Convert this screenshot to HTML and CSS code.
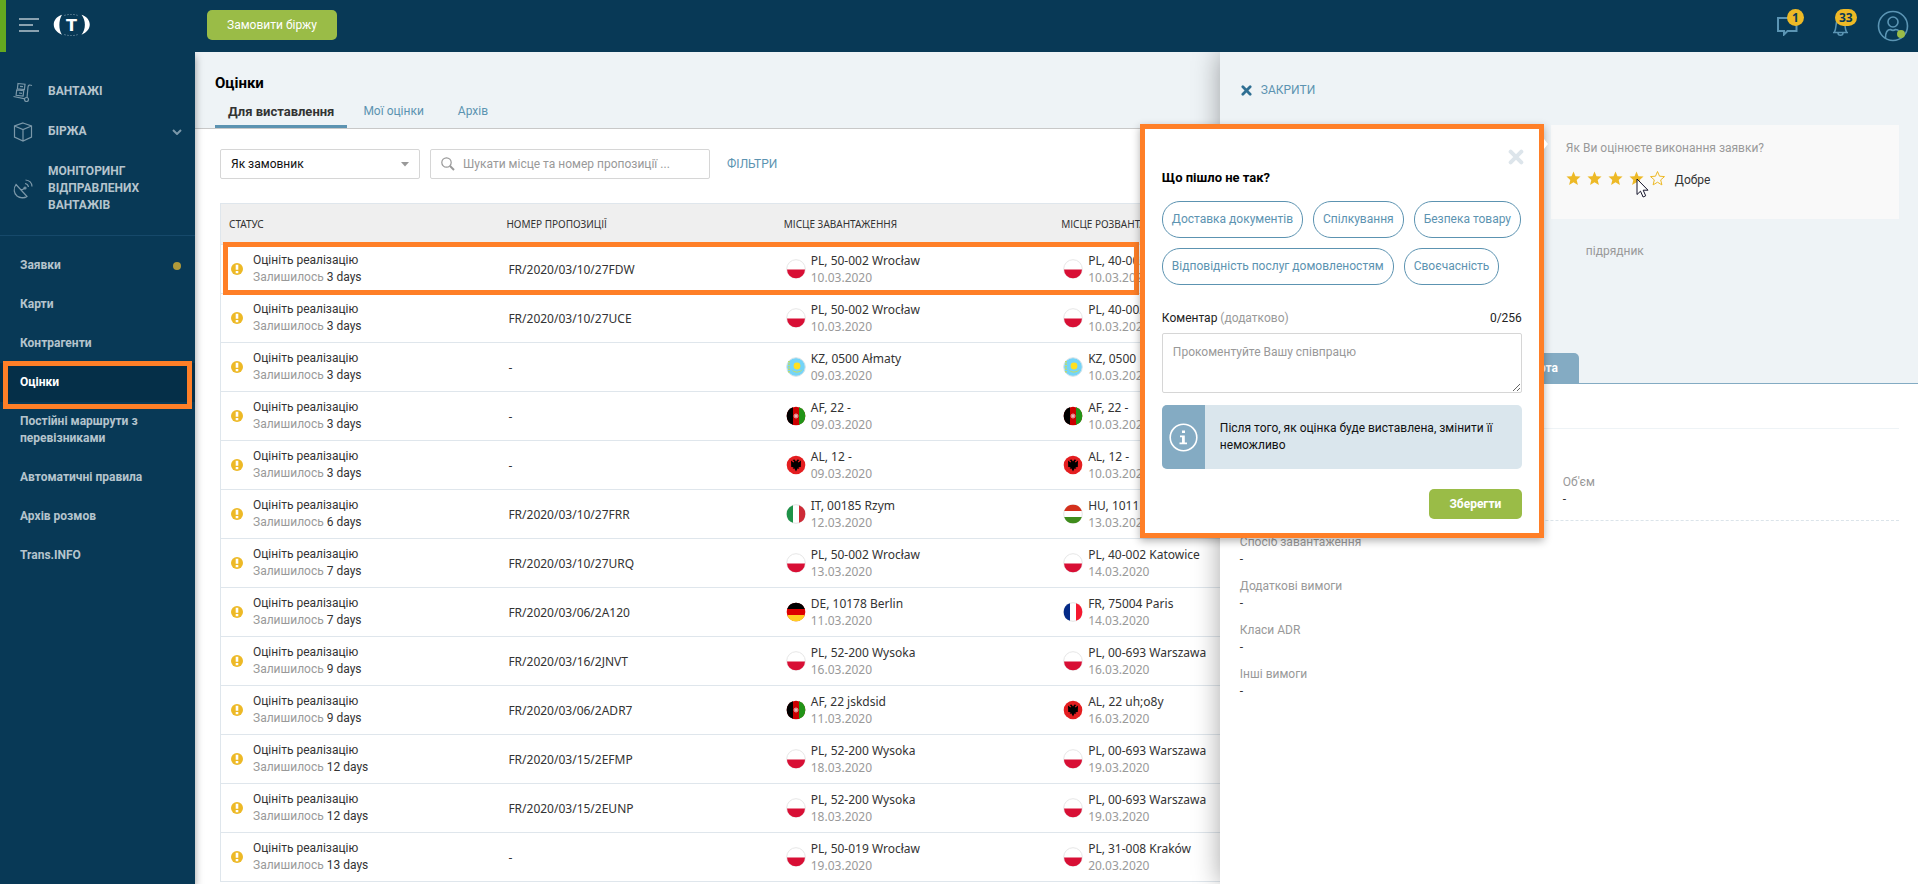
FILE: index.html
```html
<!DOCTYPE html>
<html lang="uk">
<head>
<meta charset="utf-8">
<meta name="viewport" content="width=device-width, initial-scale=1">
<title>Оцінки</title>
<link rel="stylesheet" href="styles.css">
</head>
<body>
<svg class="sprite" aria-hidden="true">
  <symbol id="warn" viewBox="0 0 12 12"><circle cx="6" cy="6" r="6" fill="#edb926"/><path d="M4.7 1.8h2.6v5H4.7zM4.7 8h2.6v2.3H4.7z" fill="#fff"/></symbol>
  <symbol id="pl" viewBox="0 0 20 20"><circle cx="10" cy="10" r="9.3" fill="#fff" stroke="#e6e6e6"/><path d="M1 10.5a9 8.8 0 0 0 18 0z" fill="#d80f35"/></symbol>
  <symbol id="kz" viewBox="0 0 20 20"><circle cx="10" cy="10" r="9.3" fill="#74d4f8" stroke="#d9e3e6"/><circle cx="11" cy="9" r="3.4" fill="#ffe01e"/><path d="M5.5 12c2 3.600 8.500 3.600 11 0-1 4-9.500 5-11 0z" fill="#d8df3c"/><path d="M3 4v12" stroke="#b8dc74" stroke-width="2" stroke-dasharray="1.500 1"/></symbol>
  <symbol id="af" viewBox="0 0 20 20"><circle cx="10" cy="10" r="9.300" fill="#c00"/><path d="M7 1.200a9.300 9.300 0 0 0 0 17.600z"/><path d="M13 1.200a9.300 9.300 0 0 1 0 17.600z" fill="#219417"/><circle cx="10" cy="10" r="2" fill="#d66" stroke="#e9a0a0"/><path d="M9 10.500h2v-1H9z" fill="#fff"/></symbol>
  <symbol id="al" viewBox="0 0 20 20"><circle cx="10" cy="10" r="9.300" fill="#e41e20"/><path d="M10 6.500 8.500 4.500 6.500 5l1.700 1.500-.7 1L5 5.500l.2 6.500 2.300.2-.8 1.600 1.800-.2L10 16.500l1.500-2.900 1.800.2-.8-1.600 2.300-.2.200-6.500-2.500 2-.7-1L13.500 5l-2-.5z"/></symbol>
  <symbol id="it" viewBox="0 0 20 20"><circle cx="10" cy="10" r="9.300" fill="#fff" stroke="#e3e3e3"/><path d="M7 1.200a9.300 9.300 0 0 0 0 17.600z" fill="#1e9248"/><path d="M13 1.200a9.300 9.300 0 0 1 0 17.600z" fill="#ce2b37"/></symbol>
  <symbol id="fr" viewBox="0 0 20 20"><circle cx="10" cy="10" r="9.300" fill="#fff" stroke="#e3e3e3"/><path d="M7 1.200a9.300 9.300 0 0 0 0 17.600z" fill="#042a87"/><path d="M13 1.200a9.300 9.300 0 0 1 0 17.600z" fill="#f5182f"/></symbol>
  <symbol id="hu" viewBox="0 0 20 20"><circle cx="10" cy="10" r="9.300" fill="#fff" stroke="#e3e3e3"/><path d="M1.200 7a9.300 9.300 0 0 1 17.600 0z" fill="#d4301c"/><path d="M1.200 13a9.300 9.300 0 0 0 17.600 0z" fill="#3f8c1c"/></symbol>
  <symbol id="de" viewBox="0 0 20 20"><circle cx="10" cy="10" r="9.300" fill="#dd0000"/><path d="M1.200 7a9.300 9.300 0 0 1 17.600 0z"/><path d="M1.200 13a9.300 9.300 0 0 0 17.600 0z" fill="#ffce22"/></symbol>
  <symbol id="star" viewBox="0 0 15 15"><path d="M7.500 .5l2 4.700 5 .4-3.800 3.300 1.200 5-4.400-2.700-4.400 2.700 1.200-5L.5 5.600l5-.4z"/></symbol>
  <symbol id="cross" viewBox="0 0 12 12"><path d="M2 2l8 8M10 2l-8 8" stroke="currentColor" stroke-width="3" stroke-linecap="round"/></symbol>
</svg>

<header class="topbar">
  <button class="burger" type="button" aria-label="Меню"><svg width="20" height="14" viewBox="0 0 20 14"><path d="M0 1h20M0 7h14M0 13h20" stroke="#8aa2b0" stroke-width="2"/></svg></button>
  <a class="logo" href="#" aria-label="Trans">
    <svg width="38" height="22" viewBox="0 0 38 22"><path d="M9 .8C-2 4.500-2 16.500 9 20.800 5.500 15.500 5.500 6.500 9 .8zM28.500 .8c11 3.700 11 15.700 0 20 4.500-5.500 4.500-14.500 0-20z" fill="#fff"/><path d="M11 1.500c5-1.500 10-1.500 14 0M11 20.500c5 1.500 10 1.500 14 0" fill="none" stroke="#4d7288" stroke-dasharray="2 1"/><text x="18.500" y="16.500" text-anchor="middle" class="logo-letter">T</text></svg>
  </a>
  <button class="btn btn-order" type="button">Замовити біржу</button>
  <div class="tools">
    <button class="tool" type="button" aria-label="Повідомлення"><svg width="21" height="20" viewBox="0 0 21 20"><path d="M1 2h18.500v13h-9L7 18.500V15H1z" fill="none" stroke="#5b95b4" stroke-width="2"/></svg><span class="badge">1</span></button>
    <button class="tool tool-bell" type="button" aria-label="Сповіщення"><svg width="17" height="20" viewBox="0 0 17 20"><path d="M1 16.500h15M2.500 16c2-3 1-10 3-12.500h6c2 2.500 1 9.500 3 12.500M6 17c0 3 5 3 5 0" fill="none" stroke="#5b95b4" stroke-width="1.500"/></svg><span class="badge">33</span></button>
    <button class="tool" type="button" aria-label="Профіль"><svg width="32" height="32" viewBox="0 0 32 32"><g fill="none" stroke="#5b95b4" stroke-width="1.600"><circle cx="16" cy="16" r="14.500"/><circle cx="16" cy="12" r="5"/><path d="M8.500 28c0-6 2-8.500 5-8.500 1.500 1 3.500 1 5 0 3 0 5 2.500 5 8.500"/></g><circle cx="24" cy="24" r="4" fill="#9abc47"/></svg></button>
  </div>
</header>

<div class="shell">
  <nav class="sidebar">
    <ul class="nav-main">
      <li><a href="#"><svg width="20" height="20" viewBox="0 0 20 20"><path d="M5 1.500l7 .7-.6 5.300-7-.7zM3.700 8l7 .7-.6 5.300-7-.7zM.5 14.500l11.500 2.300M19 3.500c-2.500-1-3.700-.5-4 1.500l-1 11M7 4.300l3 .3M6 11l3 .3"/><circle cx="13.500" cy="17.500" r="2"/></svg>ВАНТАЖІ</a></li>
      <li><a href="#"><svg width="20" height="20" viewBox="0 0 20 20"><path d="M10 1l8.500 3v11L10 19l-8.500-4V4zM1.500 4L10 7.500 18.500 4M10 7.500V19"/></svg>БІРЖА<svg class="chev" width="10" height="6" viewBox="0 0 10 6"><path d="M1 1l4 4 4-4"/></svg></a></li>
      <li><a href="#"><svg width="20" height="20" viewBox="0 0 20 20"><path d="M3 5.500c-3 4-2 9 1 11.500s7.500 2.500 10 .5zM3 5.500L14 17.500M8 11.500l4-2.500M2 15c3 4 8 4 10 3M12 4.500c2 .2 3.200 1.500 3.500 3.500M12.500 1c4 .3 6.300 3 6.500 6.500"/><circle cx="12" cy="9" r="1"/></svg>МОНІТОРИНГ ВІДПРАВЛЕНИХ ВАНТАЖІВ</a></li>
    </ul>
    <ul class="nav-sub">
      <li><a href="#">Заявки<i class="dot"></i></a></li>
      <li><a href="#">Карти</a></li>
      <li><a href="#">Контрагенти</a></li>
      <li class="active"><a href="#" aria-current="page">Оцінки</a></li>
      <li><a href="#">Постійні маршрути з перевізниками</a></li>
      <li><a href="#">Автоматичні правила</a></li>
      <li><a href="#">Архів розмов</a></li>
      <li><a href="#">Trans.INFO</a></li>
    </ul>
  </nav>

  <main class="content">
    <div class="page-head">
      <h1>Оцінки</h1>
      <nav class="tabs"><a class="current" href="#">Для виставлення</a><a href="#">Мої оцінки</a><a href="#">Архів</a></nav>
    </div>
    <div class="page-body">
      <form class="filters">
        <div class="select"><select aria-label="Роль"><option>Як замовник</option></select><svg width="8" height="5" viewBox="0 0 8 5"><path d="M0 0h8L4 4.500z" fill="#999"/></svg></div>
        <label class="search"><svg width="14" height="14" viewBox="0 0 14 14"><circle cx="5.500" cy="5.500" r="4.700" fill="none" stroke="#999" stroke-width="1.200"/><path d="M9 9l4 4" stroke="#999" stroke-width="2"/></svg><input type="text" aria-label="Пошук" placeholder="Шукати місце та номер пропозиції ..."></label>
        <a class="filter-link" href="#">ФІЛЬТРИ</a>
      </form>
      <div class="table-wrap">
      <table class="offers">
        <thead><tr><th>СТАТУС</th><th>НОМЕР ПРОПОЗИЦІЇ</th><th>МІСЦЕ ЗАВАНТАЖЕННЯ</th><th>МІСЦЕ РОЗВАНТАЖЕННЯ</th><td class="rest"></td></tr></thead>
        <tbody>
        <tr><td><div class="cell status"><svg><use href="#warn"/></svg><p>Оцініть реалізацію<br><span>Залишилось</span> 3 days</p></div></td><td>FR/2020/03/10/27FDW</td><td><div class="cell"><svg><use href="#pl"/></svg><p>PL, 50-002 Wrocław<br><span>10.03.2020</span></p></div></td><td><div class="cell"><svg><use href="#pl"/></svg><p>PL, 40-002<br><span>10.03.2020</span></p></div></td><td></td></tr>
        <tr><td><div class="cell status"><svg><use href="#warn"/></svg><p>Оцініть реалізацію<br><span>Залишилось</span> 3 days</p></div></td><td>FR/2020/03/10/27UCE</td><td><div class="cell"><svg><use href="#pl"/></svg><p>PL, 50-002 Wrocław<br><span>10.03.2020</span></p></div></td><td><div class="cell"><svg><use href="#pl"/></svg><p>PL, 40-002<br><span>10.03.2020</span></p></div></td><td></td></tr>
        <tr><td><div class="cell status"><svg><use href="#warn"/></svg><p>Оцініть реалізацію<br><span>Залишилось</span> 3 days</p></div></td><td>-</td><td><div class="cell"><svg><use href="#kz"/></svg><p>KZ, 0500 Ałmaty<br><span>09.03.2020</span></p></div></td><td><div class="cell"><svg><use href="#kz"/></svg><p>KZ, 0500<br><span>10.03.2020</span></p></div></td><td></td></tr>
        <tr><td><div class="cell status"><svg><use href="#warn"/></svg><p>Оцініть реалізацію<br><span>Залишилось</span> 3 days</p></div></td><td>-</td><td><div class="cell"><svg><use href="#af"/></svg><p>AF, 22 -<br><span>09.03.2020</span></p></div></td><td><div class="cell"><svg><use href="#af"/></svg><p>AF, 22 -<br><span>10.03.2020</span></p></div></td><td></td></tr>
        <tr><td><div class="cell status"><svg><use href="#warn"/></svg><p>Оцініть реалізацію<br><span>Залишилось</span> 3 days</p></div></td><td>-</td><td><div class="cell"><svg><use href="#al"/></svg><p>AL, 12 -<br><span>09.03.2020</span></p></div></td><td><div class="cell"><svg><use href="#al"/></svg><p>AL, 12 -<br><span>10.03.2020</span></p></div></td><td></td></tr>
        <tr><td><div class="cell status"><svg><use href="#warn"/></svg><p>Оцініть реалізацію<br><span>Залишилось</span> 6 days</p></div></td><td>FR/2020/03/10/27FRR</td><td><div class="cell"><svg><use href="#it"/></svg><p>IT, 00185 Rzym<br><span>12.03.2020</span></p></div></td><td><div class="cell"><svg><use href="#hu"/></svg><p>HU, 1011<br><span>13.03.2020</span></p></div></td><td></td></tr>
        <tr><td><div class="cell status"><svg><use href="#warn"/></svg><p>Оцініть реалізацію<br><span>Залишилось</span> 7 days</p></div></td><td>FR/2020/03/10/27URQ</td><td><div class="cell"><svg><use href="#pl"/></svg><p>PL, 50-002 Wrocław<br><span>13.03.2020</span></p></div></td><td><div class="cell"><svg><use href="#pl"/></svg><p>PL, 40-002 Katowice<br><span>14.03.2020</span></p></div></td><td></td></tr>
        <tr><td><div class="cell status"><svg><use href="#warn"/></svg><p>Оцініть реалізацію<br><span>Залишилось</span> 7 days</p></div></td><td>FR/2020/03/06/2A120</td><td><div class="cell"><svg><use href="#de"/></svg><p>DE, 10178 Berlin<br><span>11.03.2020</span></p></div></td><td><div class="cell"><svg><use href="#fr"/></svg><p>FR, 75004 Paris<br><span>14.03.2020</span></p></div></td><td></td></tr>
        <tr><td><div class="cell status"><svg><use href="#warn"/></svg><p>Оцініть реалізацію<br><span>Залишилось</span> 9 days</p></div></td><td>FR/2020/03/16/2JNVT</td><td><div class="cell"><svg><use href="#pl"/></svg><p>PL, 52-200 Wysoka<br><span>16.03.2020</span></p></div></td><td><div class="cell"><svg><use href="#pl"/></svg><p>PL, 00-693 Warszawa<br><span>16.03.2020</span></p></div></td><td></td></tr>
        <tr><td><div class="cell status"><svg><use href="#warn"/></svg><p>Оцініть реалізацію<br><span>Залишилось</span> 9 days</p></div></td><td>FR/2020/03/06/2ADR7</td><td><div class="cell"><svg><use href="#af"/></svg><p>AF, 22 jskdsid<br><span>11.03.2020</span></p></div></td><td><div class="cell"><svg><use href="#al"/></svg><p>AL, 22 uh;o8y<br><span>16.03.2020</span></p></div></td><td></td></tr>
        <tr><td><div class="cell status"><svg><use href="#warn"/></svg><p>Оцініть реалізацію<br><span>Залишилось</span> 12 days</p></div></td><td>FR/2020/03/15/2EFMP</td><td><div class="cell"><svg><use href="#pl"/></svg><p>PL, 52-200 Wysoka<br><span>18.03.2020</span></p></div></td><td><div class="cell"><svg><use href="#pl"/></svg><p>PL, 00-693 Warszawa<br><span>19.03.2020</span></p></div></td><td></td></tr>
        <tr><td><div class="cell status"><svg><use href="#warn"/></svg><p>Оцініть реалізацію<br><span>Залишилось</span> 12 days</p></div></td><td>FR/2020/03/15/2EUNP</td><td><div class="cell"><svg><use href="#pl"/></svg><p>PL, 52-200 Wysoka<br><span>18.03.2020</span></p></div></td><td><div class="cell"><svg><use href="#pl"/></svg><p>PL, 00-693 Warszawa<br><span>19.03.2020</span></p></div></td><td></td></tr>
        <tr><td><div class="cell status"><svg><use href="#warn"/></svg><p>Оцініть реалізацію<br><span>Залишилось</span> 13 days</p></div></td><td>-</td><td><div class="cell"><svg><use href="#pl"/></svg><p>PL, 50-019 Wrocław<br><span>19.03.2020</span></p></div></td><td><div class="cell"><svg><use href="#pl"/></svg><p>PL, 31-008 Kraków<br><span>20.03.2020</span></p></div></td><td></td></tr>
        </tbody>
      </table>
      <div class="highlight highlight-row"></div>
      </div>
    </div>
  </main>

  <aside class="panel">
    <div class="panel-top">
      <button class="panel-close" type="button"><svg width="11" height="11"><use href="#cross"/></svg>ЗАКРИТИ</button>
      <section class="rating">
        <p class="question">Як Ви оцінюєте виконання заявки?</p>
        <div class="stars">
          <button type="button" aria-label="1"><svg><use href="#star"/></svg></button>
          <button type="button" aria-label="2"><svg><use href="#star"/></svg></button>
          <button type="button" aria-label="3"><svg><use href="#star"/></svg></button>
          <button type="button" aria-label="4"><svg><use href="#star"/></svg><svg class="cursor" viewBox="0 0 13 20"><path d="M1 1v15.500l3.500-3.300 2.600 5.800 2.600-1.200-2.500-5.600H12z" fill="#fff" stroke="#14142b"/></svg></button>
          <button type="button" aria-label="5" class="empty"><svg><use href="#star"/></svg></button>
          <span>Добре</span>
        </div>
        <div class="popover" role="dialog" aria-label="Що пішло не так?">
          <button class="pop-close" type="button" aria-label="Закрити"><svg width="16" height="16"><use href="#cross"/></svg></button>
          <h2>Що пішло не так?</h2>
          <div class="chips"><button type="button">Доставка документів</button><button type="button">Спілкування</button><button type="button">Безпека товару</button><button type="button">Відповідність послуг домовленостям</button><button type="button">Своєчасність</button></div>
          <div class="comment-head"><label for="comment">Коментар <span>(додатково)</span></label><span>0/256</span></div>
          <textarea id="comment" placeholder="Прокоментуйте Вашу співпрацю"></textarea>
          <div class="note"><div class="note-icon"><svg width="29" height="29" viewBox="0 0 29 29"><circle cx="14.500" cy="14.500" r="13.300" fill="none" stroke="#fff" stroke-width="1.600"/><path d="M13 7.500h3v2.600h-3zM11 12.500h4.800v7H18v1.800h-7.500v-1.800H13v-5.200h-2z" fill="#fff"/></svg></div><p>Після того, як оцінка буде виставлена, змінити її неможливо</p></div>
          <button class="btn btn-save" type="button">Зберегти</button>
        </div>
      </section>
      <p class="role">підрядник</p>
      <nav class="panel-tabs"><a href="#">Карта</a></nav>
    </div>
    <div class="panel-body">
      <div class="volume"><dl><dt>Об'єм</dt><dd>-</dd></dl></div>
      <dl class="details"><dt>Спосіб завантаження</dt><dd>-</dd><dt>Додаткові вимоги</dt><dd>-</dd><dt>Класи ADR</dt><dd>-</dd><dt>Інші вимоги</dt><dd>-</dd></dl>
    </div>
  </aside>
</div>
</body>
</html>
```
FILE: styles.css
```css
* { box-sizing: border-box; }
:root {
  --navy: #083956;
  --blue: #5c93b1;
  --orange: #ff7f27;
  --pale: #eef3f6;
  --grey: #999;
}
html, body { height: 100%; }
body {
  margin: 0;
  display: flex;
  flex-direction: column;
  overflow: hidden;
  font: 12px/17px Roboto, "Noto Sans", sans-serif;
  color: #333;
  background: #fff;
}
a { color: inherit; text-decoration: none; }
h1, h2, p, ul, dl, dd { margin: 0; padding: 0; list-style: none; }
button, input, select, textarea { font: inherit; color: inherit; }
button { padding: 0; border: 0; background: none; cursor: pointer; }
svg { flex: none; }
.sprite { display: none; }

.btn { height: 30px; border-radius: 5px; background: #9abc47; color: #fff; }

.topbar {
  flex: none;
  position: relative;
  z-index: 2;
  display: flex;
  align-items: center;
  height: 52px;
  padding: 0 9px 0 13px;
  border-left: 6px solid #64a820;
  background: var(--navy);
}
.topbar svg { display: block; }
.topbar .logo { margin: 0 116px 0 14px; }
.topbar .burger { padding-bottom: 2px; }
.topbar .logo { padding-bottom: 2px; }
.logo-letter { font: bold 16px "DejaVu Sans", sans-serif; fill: #fff; }
.btn-order { width: 130px; margin-bottom: 2px; }
.tools { display: flex; align-items: center; gap: 34px; margin-left: auto; }
.tool { position: relative; }
.tool-bell { margin-right: -6px; }
.badge {
  position: absolute;
  left: 10px;
  top: -7px;
  min-width: 17px;
  padding: 0 4px;
  border-radius: 9px;
  background: #edb926;
  color: var(--navy);
  font-family: "Noto Sans", sans-serif;
  font-weight: bold;
}
.tool-bell .badge { left: 3px; }

.shell { position: relative; flex: 1; display: flex; min-height: 0; }

.sidebar {
  flex: none;
  width: 195px;
  z-index: 1;
  background: var(--navy);
  color: #b5c4cd;
  font-weight: bold;
  box-shadow: 0 4px 8px rgba(0, 0, 0, .4);
}
.nav-main { padding: 20px 0 9px; border-bottom: 1px solid #16496a; }
.nav-main a { display: flex; align-items: center; gap: 15px; padding: 11px 13px 12px; }
.nav-main svg { margin: -2px 0; fill: none; stroke: #7b98a9; stroke-width: 1.2; }
.nav-main .chev { margin: 0 0 0 auto; stroke-width: 2; }
.nav-sub { padding-top: 10px; }
.nav-sub a { display: flex; align-items: center; padding: 11px 14px 11px 20px; }
.dot { width: 8px; height: 8px; margin-left: auto; border-radius: 50%; background: #b09a3a; }
.active { position: relative; background: #052f48; color: #fff; }
.active::after {
  content: "";
  position: absolute;
  inset: -2px 3px -7px;
  border: 5px solid var(--orange);
}

.content { flex: 1; min-width: 0; }
.page-head { padding: 21px 20px 0; background: var(--pale); border-bottom: 1px solid #c8c8c8; }
h1 { font-size: 15px; line-height: 20px; color: #000; }
.tabs { display: flex; margin-top: 8px; color: var(--blue); }
.tabs a { padding: 2px 13px 5px; margin-right: 8px; border-bottom: 3px solid transparent; }
.tabs .current { margin-right: 3px; border-color: var(--blue); color: #333; font-size: 13px; font-weight: bold; }
.page-body { padding: 20px 30px 0 25px; }
.filters { display: flex; align-items: center; gap: 10px; }
.select { position: relative; width: 200px; }
.select select { appearance: none; width: 100%; height: 30px; padding: 0 10px; border: 1px solid #d6d6d6; border-radius: 2px; background: #fff; color: #111; }
.select svg { position: absolute; right: 11px; top: 13px; }
.search { display: flex; align-items: center; gap: 8px; width: 280px; height: 30px; padding: 0 10px; border: 1px solid #d6d6d6; border-radius: 2px; }
.search input { flex: 1; min-width: 0; padding: 0; border: 0; outline: 0; }
::placeholder { color: var(--grey); opacity: 1; }
.filter-link { margin-left: 7px; color: var(--blue); }

.table-wrap { position: relative; margin-top: 24px; }
.offers { width: 100%; table-layout: fixed; border-collapse: separate; border-spacing: 0; border: 1px solid #dfe6ec; border-bottom: 0; font-family: "Noto Sans", sans-serif; }
.offers th { width: 16.65%; height: 41px; padding: 0 8px; background: #efefef; border-bottom: 1px solid #dfe6ec; text-align: left; font-size: 10px; font-weight: normal; }
.offers .rest { height: 41px; background: #efefef; }
.offers td { height: 49px; padding: 0 8px; border-bottom: 1px solid #dfe6ec; }
.offers tbody td + td { padding-left: 10px; }
.cell { display: flex; align-items: center; gap: 5px; }
.cell svg { width: 20px; height: 20px; }
.cell span { color: var(--grey); }
.status { gap: 10px; padding-left: 2px; font-family: Roboto, sans-serif; }
.status svg { width: 12px; height: 12px; }
.highlight { position: absolute; border: 5px solid var(--orange); pointer-events: none; }
.highlight-row { left: 3px; top: 39px; width: 916px; height: 53px; }

.panel {
  position: absolute;
  right: 0;
  top: 0;
  bottom: 0;
  width: 36.4%;
  display: flex;
  flex-direction: column;
  background: #fff;
  box-shadow: 0 0 25px rgba(0, 0, 0, .35);
}
.panel-top { padding: 30px 19px 0 20px; background: var(--pale); border-bottom: 1px solid #83abc3; }
.panel-close { display: flex; align-items: center; gap: 9px; padding-left: 1px; color: var(--blue); }
.panel-close svg { color: #2f6f93; }
.rating { position: relative; margin: 26px 0 0 311px; height: 94px; padding: 15px; background: #f9f9f9; }
.question, .role { color: var(--grey); }
.stars { display: flex; align-items: center; gap: 6px; margin-top: 11px; }
.stars button { position: relative; width: 15px; height: 18px; }
.stars svg { display: block; width: 15px; height: 15px; fill: #edb926; }
.stars .empty svg { fill: none; stroke: #edb926; }
.stars span { margin: 4px 0 0 4px; }
.stars .cursor { position: absolute; left: 7px; top: 8px; width: 13px; height: 20px; }
.role { margin: 24px 0 0 346px; }
.panel-tabs { display: flex; margin: 93px 0 0 263px; }
.panel-tabs a { min-width: 76px; padding: 7px 21px 6px; border-radius: 5px 5px 0 0; background: #84abc3; color: #fff; font-weight: bold; text-align: right; }
.panel-body { padding: 44px 19px 0 20px; }
.volume { padding: 45px 0 13px; border-top: 1px solid #eef3f6; border-bottom: 1px dashed #dbe4ea; }
.volume dl { margin-left: 49%; }
dt { color: var(--grey); }
dd { line-height: 16px; }
.details { padding-top: 13px; }
.details dd { margin-bottom: 11px; }

.popover {
  position: absolute;
  right: 100%;
  top: -1px;
  width: 404px;
  margin-right: 7px;
  padding: 20px 17px 14px;
  border: 5px solid var(--orange);
  background: #fff;
  color: #222;
  box-shadow: 0 3px 8px rgba(0, 0, 0, .3);
}
.popover::after {
  content: "";
  position: absolute;
  right: -9px;
  top: 10px;
  border: 5px solid transparent;
  border-width: 5px 0 5px 4px;
  border-left-color: #fff;
}
.pop-close { display: block; margin: 0 -2px 0 auto; height: 16px; color: #dde5eb; }
.pop-close svg { display: block; }
h2 { margin-top: 4px; font-size: 13px; line-height: 17px; color: #000; }
.chips { display: flex; flex-wrap: wrap; gap: 10px; margin-top: 15px; }
.chips button { height: 37px; padding: 0 9px; border: 1px solid var(--blue); border-radius: 18px; color: var(--blue); }
.comment-head { display: flex; justify-content: space-between; margin: 25px 0 6px; color: #222; }
.comment-head label span { color: var(--grey); }
textarea { display: block; width: 100%; height: 60px; padding: 10px; border: 1px solid #d6d6d6; border-radius: 2px; }
.note { display: flex; margin-top: 12px; border-radius: 5px; overflow: hidden; background: #dae6ed; }
.note-icon { flex: none; width: 43px; display: flex; align-items: center; justify-content: center; background: #84abc3; }
.note p { padding: 15px 15px; color: #111; }
.btn-save { display: block; width: 93px; margin: 20px 0 0 auto; font-weight: bold; }
```
